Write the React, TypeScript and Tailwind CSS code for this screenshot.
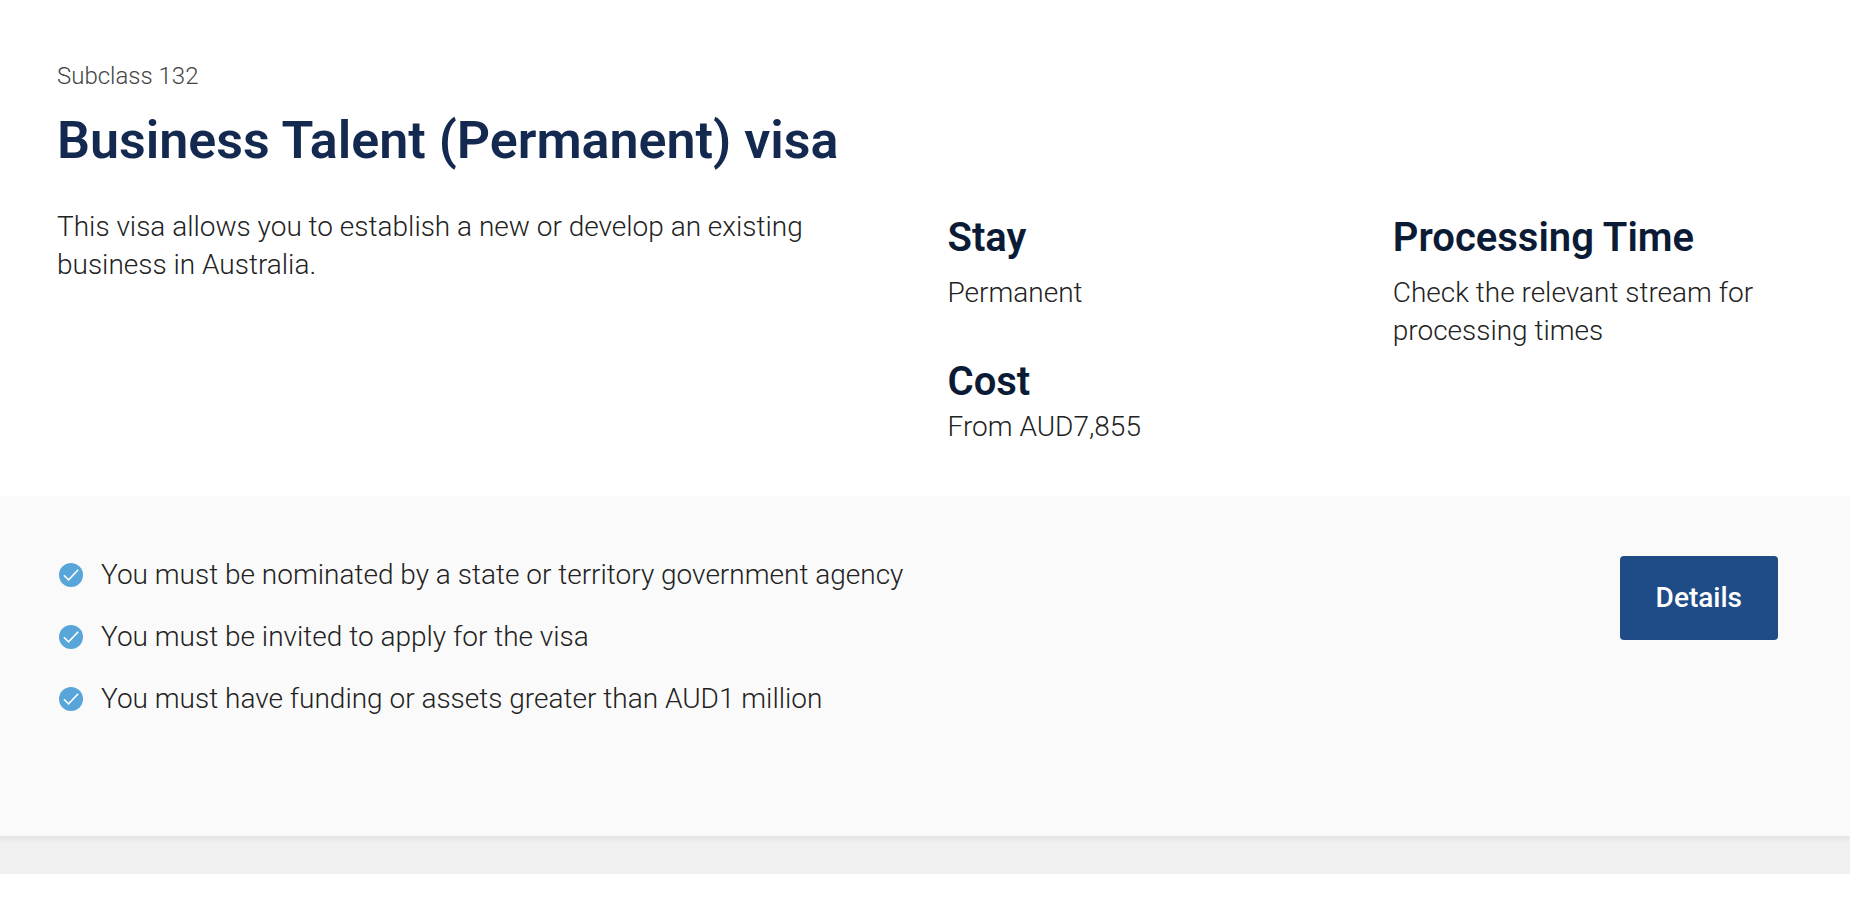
import { ReactNode } from "react";

const requirements = [
    "You must be nominated by a state or territory government agency",
    "You must be invited to apply for the visa",
    "You must have funding or assets greater than AUD1 million",
];

function CheckIcon() {
    return (
        <svg className="size-6 shrink-0" viewBox="0 0 24 24" fill="none" aria-hidden="true">
            <circle cx="12" cy="12" r="12" fill="#58a5da" />
            <path d="M4.9 12.2l4.7 4.6L19.2 6.8" stroke="#fff" strokeWidth="1.6" />
        </svg>
    );
}

type FactProps = {
    title: string
    children: ReactNode
}

function Fact({ title, children }: FactProps) {
    return (
        <div>
            <h2 className="text-[40px] leading-12 font-semibold text-[#0b1b36]">{title}</h2>
            {children}
        </div>
    );
}

export default function App() {
    return (
        <main className="min-h-screen bg-white font-[Roboto,sans-serif] text-[28px] leading-[38px] font-light text-[#222]">
            <article>
                <header className="px-[57px] pt-14">
                    <p className="text-2xl leading-10 text-[#444]">Subclass 132</p>
                    <h1 className="text-[52px] leading-[90px] font-semibold text-[#13294f]">Business Talent (Permanent) visa</h1>
                </header>
                <div className="grid grid-cols-[2fr_1fr_1fr] pt-[22px] pr-3 pb-[50px] pl-[57px]">
                    <p className="pr-20">This visa allows you to establish a new or develop an existing business in Australia.</p>
                    <div className="pt-1.5">
                        <Fact title="Stay"><p className="mt-3">Permanent</p></Fact>
                        <div className="mt-[46px]">
                            <Fact title="Cost"><p className="mt-0.5">From AUD7,855</p></Fact>
                        </div>
                    </div>
                    <div className="pt-1.5">
                        <Fact title="Processing Time"><p className="mt-3">Check the relevant stream for processing times</p></Fact>
                    </div>
                </div>
                <div className="flex items-start justify-between bg-[#fafafa] pt-[60px] pr-[72px] pb-[118px] pl-[59px]">
                    <ul className="flex flex-col gap-6">
                        {requirements.map((text) => (
                            <li key={text} className="flex items-center gap-[18px]">
                                <CheckIcon />
                                <span>{text}</span>
                            </li>
                        ))}
                    </ul>
                    <button className="h-[84px] rounded bg-[#1f4c87] px-9 font-medium text-white">Details</button>
                </div>
            </article>
            <div className="h-[38px] bg-[#f0f0f0] bg-linear-to-b from-[#e4e4e4] to-[#f0f0f0] to-[6px]" />
        </main>
    );
}
